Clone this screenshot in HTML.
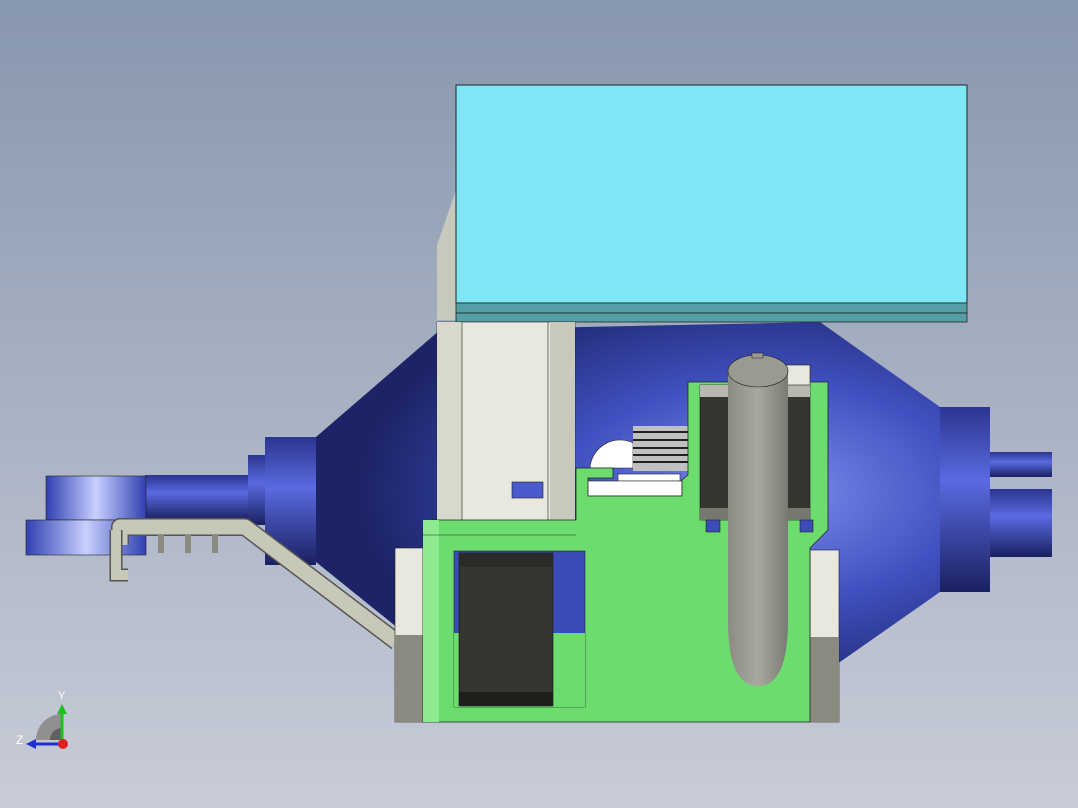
<!DOCTYPE html>
<html><head><style>html,body{margin:0;padding:0;width:1078px;height:808px;overflow:hidden}</style></head>
<body>
<svg width="1078" height="808" viewBox="0 0 1078 808" xmlns="http://www.w3.org/2000/svg">
<defs>
<linearGradient id="bg" x1="0" y1="0" x2="0" y2="1"><stop offset="0" stop-color="#8797ae"/><stop offset="1" stop-color="#c9ccd8"/></linearGradient>
<radialGradient id="cone" cx="0.72" cy="0.5" r="0.65"><stop offset="0" stop-color="#7f8ff0"/><stop offset="0.5" stop-color="#4050c0"/><stop offset="1" stop-color="#1c2366"/></radialGradient>
<linearGradient id="cyl" x1="0" y1="0" x2="0" y2="1"><stop offset="0" stop-color="#2c3590"/><stop offset="0.4" stop-color="#5a6ae0"/><stop offset="1" stop-color="#1a2060"/></linearGradient>
<linearGradient id="disc" x1="0" y1="0" x2="1" y2="0"><stop offset="0" stop-color="#3040b0"/><stop offset="0.5" stop-color="#c8d0ff"/><stop offset="1" stop-color="#3040b0"/></linearGradient>
<linearGradient id="tube" x1="0" y1="0" x2="1" y2="0"><stop offset="0" stop-color="#8c8c84"/><stop offset="0.5" stop-color="#a8a89e"/><stop offset="1" stop-color="#7a7a74"/></linearGradient>
</defs>
<rect width="1078" height="808" fill="url(#bg)"/>
<polygon points="316,437 440,330 820,322 940,407 940,592 840,662 440,662 316,562" fill="url(#cone)"/>
<rect x="940" y="407" width="50" height="185" fill="url(#cyl)"/>
<rect x="990" y="452" width="62" height="25" fill="url(#cyl)"/>
<rect x="990" y="489" width="62" height="68" fill="url(#cyl)"/>
<rect x="265" y="437" width="51" height="128" fill="url(#cyl)"/>
<rect x="248" y="455" width="17" height="70" fill="url(#cyl)"/>
<rect x="145" y="475" width="103" height="45" fill="url(#cyl)"/>
<rect x="46" y="476" width="100" height="44" fill="url(#disc)" stroke="#222" stroke-width="0.6"/>
<rect x="26" y="520" width="120" height="35" fill="url(#disc)" stroke="#222" stroke-width="0.6"/>
<polyline points="120,545 120,527 245,527 397,642" fill="none" stroke="#555" stroke-width="18" stroke-linejoin="round"/>
<polyline points="120,545 120,527 245,527 397,642" fill="none" stroke="#c8c8b8" stroke-width="15" stroke-linejoin="round"/>
<polyline points="128,575 116,575 116,530" fill="none" stroke="#555" stroke-width="13"/>
<polyline points="128,575 116,575 116,530" fill="none" stroke="#c8c8b8" stroke-width="10"/>
<rect x="158" y="535" width="6" height="18" fill="#8a8a80"/><rect x="185" y="535" width="6" height="18" fill="#8a8a80"/><rect x="212" y="535" width="6" height="18" fill="#8a8a80"/>
<polygon points="456,190 437,245 437,320 456,320" fill="#c8c8bc"/>
<rect x="456" y="85" width="511" height="218" fill="#7fe6f5" stroke="#222" stroke-width="1"/>
<rect x="456" y="303" width="511" height="10" fill="#55a0a6" stroke="#222" stroke-width="0.8"/>
<rect x="456" y="313" width="511" height="9" fill="#55a0a6" stroke="#222" stroke-width="0.8"/>
<rect x="437" y="322" width="138" height="200" fill="#e8e8de" stroke="#222" stroke-width="0.6"/>
<rect x="437" y="322" width="25" height="200" fill="#d8d8cc"/>
<rect x="550" y="322" width="25" height="200" fill="#c8c8bc"/>
<line x1="462" y1="322" x2="462" y2="522" stroke="#222" stroke-width="0.6"/>
<line x1="548" y1="322" x2="548" y2="522" stroke="#222" stroke-width="0.6"/>
<rect x="512" y="482" width="31" height="16" fill="#4a5ccc" stroke="#222" stroke-width="0.6"/>
<path d="M590,468 A30,30 0 0 1 633,443 L633,468 Z" fill="#fff" stroke="#222" stroke-width="0.6"/>
<rect x="633" y="426" width="56" height="45" fill="#c0c0c0"/>
<g stroke="#222" stroke-width="2"><line x1="633" y1="432" x2="689" y2="432"/><line x1="633" y1="440" x2="689" y2="440"/><line x1="633" y1="448" x2="689" y2="448"/><line x1="633" y1="455" x2="689" y2="455"/><line x1="633" y1="462" x2="689" y2="462"/></g>
<rect x="618" y="474" width="62" height="7" fill="#fff" stroke="#222" stroke-width="0.6"/>
<rect x="585" y="481" width="97" height="15" fill="#fff" stroke="#222" stroke-width="0.6"/>
<rect x="395" y="548" width="30" height="174" fill="#e8e8de" stroke="#222" stroke-width="0.6"/>
<rect x="395" y="635" width="30" height="87" fill="#8a8a80"/>
<rect x="810" y="550" width="29" height="172" fill="#e8e8de" stroke="#222" stroke-width="0.6"/>
<rect x="810" y="637" width="29" height="85" fill="#8a8a80"/>
<path d="M423,530 Q423,520 433,520 L576,520 L576,468 L613,468 L613,478 L588,478 L588,496 L682,496 L682,480 L688,475 L688,382 L828,382 L828,530 L810,548 L810,722 L423,722 Z" fill="#6ddc6e" stroke="#222" stroke-width="0.8"/>
<rect x="423" y="520" width="16" height="202" fill="#8eea8e"/>
<line x1="423" y1="535" x2="576" y2="535" stroke="#222" stroke-width="0.6"/>
<rect x="454" y="551" width="131" height="156" fill="#3b4bb8" stroke="#222" stroke-width="0.6"/>
<rect x="454" y="633" width="131" height="74" fill="#6ddc6e"/>
<rect x="459" y="553" width="94" height="153" fill="#363630" stroke="#111" stroke-width="0.6"/>
<rect x="459" y="553" width="94" height="14" fill="#2a2a26"/>
<rect x="459" y="692" width="94" height="14" fill="#1e1e1a"/>
<rect x="700" y="385" width="110" height="135" fill="#363630" stroke="#111" stroke-width="0.6"/>
<rect x="700" y="385" width="110" height="12" fill="#b8b8b0"/>
<rect x="700" y="508" width="110" height="12" fill="#777770"/>
<rect x="785" y="365" width="25" height="20" fill="#e8e8de" stroke="#222" stroke-width="0.6"/>
<rect x="706" y="520" width="14" height="12" fill="#3b4bb8" stroke="#222" stroke-width="0.6"/>
<rect x="800" y="520" width="13" height="12" fill="#3b4bb8" stroke="#222" stroke-width="0.6"/>
<path d="M728,370 L788,370 L788,620 Q788,686 758,686 Q728,686 728,620 Z" fill="url(#tube)"/>
<ellipse cx="758" cy="371" rx="30" ry="16" fill="#9a9a92" stroke="#222" stroke-width="0.6"/>
<rect x="752" y="353" width="11" height="5" fill="#9a9a92" stroke="#222" stroke-width="0.5"/>
<path d="M36,740 A26,26 0 0 1 62,714 L62,740 Z" fill="#909090"/>
<path d="M50,740 A12,12 0 0 1 62,728 L62,740 Z" fill="#606060"/>
<line x1="62" y1="740" x2="62" y2="712" stroke="#20c020" stroke-width="3"/><polygon points="57,714 67,714 62,704" fill="#20c020"/>
<line x1="62" y1="744" x2="34" y2="744" stroke="#2030d0" stroke-width="3"/><polygon points="36,739 36,749 26,744" fill="#2030d0"/>
<circle cx="63" cy="744" r="5" fill="#e02020"/>
<text x="58" y="699" font-family="Liberation Sans,sans-serif" font-size="11" fill="#fff">Y</text>
<text x="16" y="744" font-family="Liberation Sans,sans-serif" font-size="12" fill="#fff">Z</text>
</svg>
</body></html>
